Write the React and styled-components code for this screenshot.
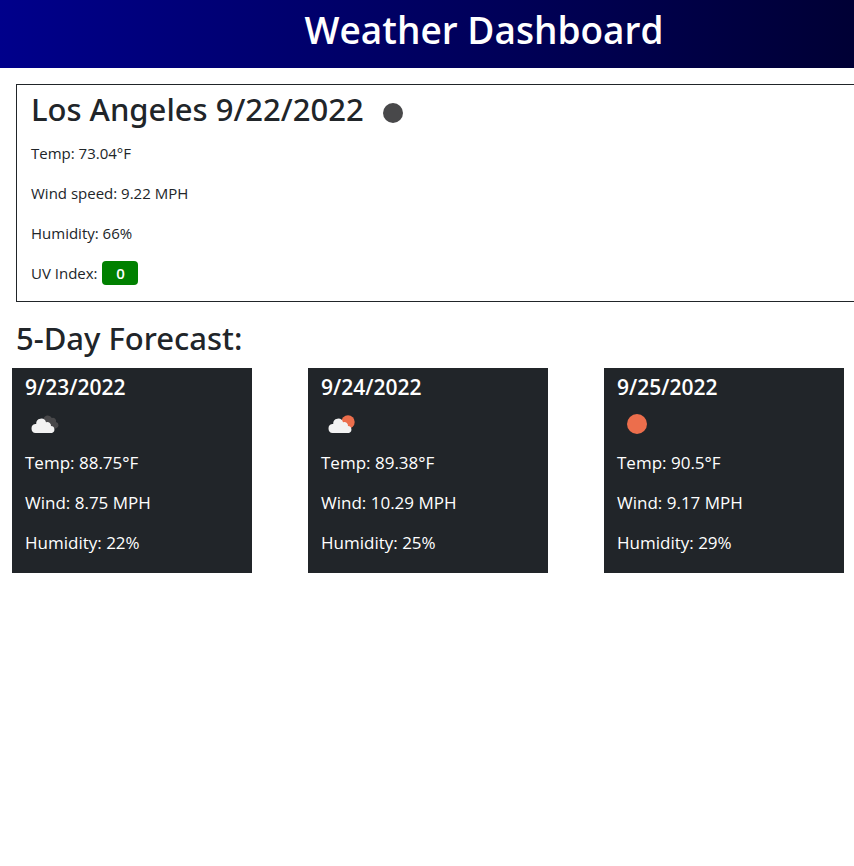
import React from 'react';
import styled, { createGlobalStyle } from 'styled-components';

const GlobalStyle = createGlobalStyle`
  *, *::before, *::after { box-sizing: border-box; }
  body {
    margin: 0;
    background: #fff;
    color: #212529;
    font-family: "Open Sans", "Noto Sans", sans-serif;
    font-size: 16px;
    line-height: 24px;
  }
  h1, h2, h3, p { margin: 0; }
`;

const Page = styled.div`
  overflow-x: hidden;
`;

const Header = styled.header`
  height: 68px;
  padding: 6px 0 0 114px;
  background: linear-gradient(to right, #00008b, #000035);
  color: #fff;
  text-align: center;
`;

const Title = styled.h1`
  font-size: 37px;
  line-height: 48px;
  font-weight: 600;
  white-space: nowrap;
`;

const Current = styled.section`
  margin: 16px 0 0 16px;
  padding: 0 0 16px 14px;
  border: 1px solid #212529;
  border-right: 0;
`;

const CityRow = styled.div`
  display: flex;
  align-items: flex-end;
  gap: 9px;
  height: 56px;
  padding-bottom: 8px;
`;

const Heading = styled.h2`
  font-family: "Noto Sans", "Open Sans", sans-serif;
  font-size: 31px;
  line-height: 38px;
  font-weight: 500;
  white-space: nowrap;
`;

const CityHeading = styled(Heading)`
  padding-bottom: 5px;
`;

const Readings = styled.div`
  display: flex;
  flex-direction: column;
  gap: 16px;
  font-size: ${(p) => (p.$large ? 17 : 15)}px;
`;

const UvBadge = styled.span`
  display: inline-block;
  width: 36px;
  margin-left: 1px;
  border-radius: 4px;
  background: #008000;
  color: #fff;
  font-weight: 600;
  text-align: center;
`;

const Forecast = styled.section`
  padding: 17px 10px 0 12px;
`;

const ForecastHeading = styled(Heading)`
  padding-left: 4px;
`;

const Cards = styled.div`
  display: flex;
  flex-wrap: wrap;
  justify-content: space-between;
  gap: 16px;
  margin-top: 11px;
`;

const Card = styled.article`
  width: 240px;
  padding: 6px 13px 18px;
  background: #212529;
  color: #fff;
`;

const CardDate = styled.h3`
  font-size: 21px;
  line-height: 26px;
  font-weight: 600;
`;

const IconSvg = styled.svg`
  display: block;
  flex: none;
  width: 40px;
  height: 40px;
`;

const CardIcon = styled(IconSvg)`
  margin: 4px 0 7px;
`;

const CLOUD =
  'M10.5 29A4.5 4.5 0 0 1 10.2 20.1L11.2 20A5 5 0 0 1 21 18.3A3.6 3.6 0 0 1 26 22A3.6 3.6 0 0 1 27 29Z';

function ConditionArt({ kind }) {
  if (kind === 'night') return <circle cx="20" cy="20" r="10" fill="#48484a" />;
  if (kind === 'sun') return <circle cx="20" cy="20" r="10" fill="#ec6e4c" />;
  if (kind === 'partly') {
    return (
      <>
        <circle cx="27" cy="18" r="6.7" fill="#ec6e4c" />
        <path d={CLOUD} transform="translate(1 0)" fill="#f2f2f2" />
      </>
    );
  }
  return (
    <>
      <path
        d="M17 19A3.5 3.5 0 0 1 18.5 14.2A4.4 4.4 0 0 1 26.8 13.6A3.2 3.2 0 0 1 31 17.6A3.3 3.3 0 0 1 31 24H24Z"
        transform="translate(0 0.5)"
        fill="#48484a"
      />
      <path d={CLOUD} fill="#f2f2f2" />
    </>
  );
}

const DAYS = [
  { date: '9/23/2022', kind: 'cloudy', label: 'Cloudy', temp: '88.75', wind: '8.75', humidity: 22 },
  { date: '9/24/2022', kind: 'partly', label: 'Partly cloudy', temp: '89.38', wind: '10.29', humidity: 25 },
  { date: '9/25/2022', kind: 'sun', label: 'Clear', temp: '90.5', wind: '9.17', humidity: 29 },
];

export default function App() {
  return (
    <Page>
      <GlobalStyle />
      <Header>
        <Title>Weather Dashboard</Title>
      </Header>
      <main>
        <Current>
          <CityRow>
            <CityHeading>Los Angeles 9/22/2022</CityHeading>
            <IconSvg viewBox="0 0 40 40" role="img" aria-label="Clear night">
              <ConditionArt kind="night" />
            </IconSvg>
          </CityRow>
          <Readings>
            <p>Temp: 73.04°F</p>
            <p>Wind speed: 9.22 MPH</p>
            <p>Humidity: 66%</p>
            <p>
              UV Index: <UvBadge>0</UvBadge>
            </p>
          </Readings>
        </Current>
        <Forecast>
          <ForecastHeading>5-Day Forecast:</ForecastHeading>
          <Cards>
            {DAYS.map((day) => (
              <Card key={day.date}>
                <CardDate>{day.date}</CardDate>
                <CardIcon viewBox="0 0 40 40" role="img" aria-label={day.label}>
                  <ConditionArt kind={day.kind} />
                </CardIcon>
                <Readings $large>
                  <p>Temp: {day.temp}°F</p>
                  <p>Wind: {day.wind} MPH</p>
                  <p>Humidity: {day.humidity}%</p>
                </Readings>
              </Card>
            ))}
          </Cards>
        </Forecast>
      </main>
    </Page>
  );
}
